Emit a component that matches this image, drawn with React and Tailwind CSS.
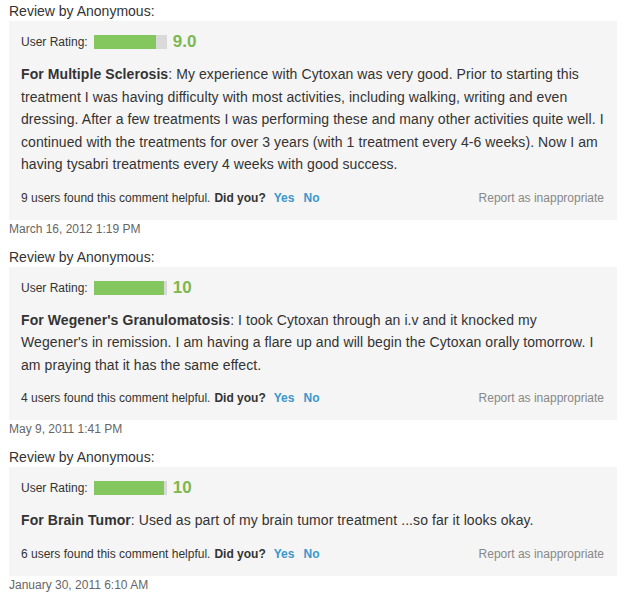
const reviews = [
  {
    score: "9.0",
    fill: "w-[62px]",
    condition: "Multiple Sclerosis",
    text: "My experience with Cytoxan was very good. Prior to starting this treatment I was having difficulty with most activities, including walking, writing and even dressing. After a few treatments I was performing these and many other activities quite well. I continued with the treatments for over 3 years (with 1 treatment every 4-6 weeks). Now I am having tysabri treatments every 4 weeks with good success.",
    helpful: 9,
    date: "March 16, 2012 1:19 PM",
  },
  {
    score: "10",
    fill: "w-[70px]",
    condition: "Wegener's Granulomatosis",
    text: "I took Cytoxan through an i.v and it knocked my Wegener's in remission. I am having a flare up and will begin the Cytoxan orally tomorrow. I am praying that it has the same effect.",
    helpful: 4,
    date: "May 9, 2011 1:41 PM",
  },
  {
    score: "10",
    fill: "w-[70px]",
    condition: "Brain Tumor",
    text: "Used as part of my brain tumor treatment ...so far it looks okay.",
    helpful: 6,
    date: "January 30, 2011 6:10 AM",
  },
];

function Review({ r, first }) {
  return (
    <div className={first ? "" : "mt-[10px]"}>
      <div className="text-[14px] leading-[18px] text-[#333] mb-[1px]">Review by Anonymous:</div>
      <div className="bg-[#f5f5f5] pl-3 pr-[13px] pt-3 pb-[13px]">
        <div className="flex items-center h-[18px] text-[12px]">
          <span className="text-[#333]">User Rating:</span>
          <div className="ml-[6px] w-[73px] h-[14px] bg-[#d9d9d9]">
            <div className={"h-full bg-[#84c75e] " + r.fill} />
          </div>
          <span className="ml-[6px] text-[17px] leading-[18px] font-bold text-[#7cb84f]">{r.score}</span>
        </div>
        <p className="mt-3 text-[14px] leading-[22.5px] tracking-[0.08px] text-[#333]">
          <b className="font-bold">For {r.condition}</b>: {r.text}
        </p>
        <div className="mt-[13px] flex justify-between items-center h-[18px] text-[12px]">
          <div className="flex items-center">
            <span className="text-[#333]">{r.helpful} users found this comment helpful.</span>
            <span className="ml-1 font-bold text-[#333]">Did you?</span>
            <span className="ml-[8px] font-bold text-[#3a98cc]">Yes</span>
            <span className="ml-[9px] font-bold text-[#3a98cc]">No</span>
          </div>
          <span className="text-[#888]">Report as inappropriate</span>
        </div>
      </div>
      <div className="text-[12px] leading-[18px] text-[#666]">{r.date}</div>
    </div>
  );
}

export default function App() {
  return (
    <div className="bg-white w-[624px] min-h-[596px] pt-[2px] pl-[9px] pr-[7px] font-['Liberation_Sans',Arial,sans-serif]">
      {reviews.map((r, i) => (
        <Review key={i} r={r} first={i === 0} />
      ))}
    </div>
  );
}
